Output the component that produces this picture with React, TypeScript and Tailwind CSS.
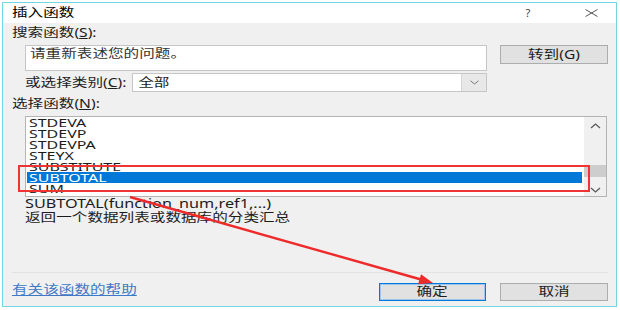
import React from "react";

function Up() {
  return (
    <svg width="11" height="6" viewBox="0 0 11 6">
      <polyline points="1,5 5.5,1 10,5" fill="none" stroke="#5a5a5a" strokeWidth="1.3" />
    </svg>
  );
}
function Down() {
  return (
    <svg width="11" height="6" viewBox="0 0 11 6">
      <polyline points="1,1 5.5,5 10,1" fill="none" stroke="#5a5a5a" strokeWidth="1.3" />
    </svg>
  );
}

const items = ["STDEVA", "STDEVP", "STDEVPA", "STEYX", "SUBSTITUTE", "SUBTOTAL", "SUM"];

export default function App() {
  return (
    <div className="relative w-[620px] h-[310px] bg-white pt-[2px] pl-[2px] overflow-hidden font-['Noto_Sans','Noto_Sans_CJK_SC',sans-serif] text-[12px] leading-[14px] text-[#1c1c1c]">
      <div className="w-[615px] h-[305px] border border-[#74d6de] flex flex-col">
        {/* title bar */}
        <div className="h-[20px] shrink-0 bg-white flex items-center pl-[9px] pr-[15px]">
          <span className="inline-block origin-left scale-x-[1.3] whitespace-nowrap text-black">插入函数</span>
          <span className="ml-auto w-[16px] text-center text-[#444] text-[11px]">?</span>
          <span className="ml-[45px] w-[20px] flex justify-center">
            <svg width="13" height="8" viewBox="0 0 13 8">
              <line x1="0.5" y1="0.5" x2="12.5" y2="7.5" stroke="#555" strokeWidth="1" />
              <line x1="0.5" y1="7.5" x2="12.5" y2="0.5" stroke="#555" strokeWidth="1" />
            </svg>
          </span>
        </div>

        {/* body */}
        <div className="flex-1 bg-[#f0f0f0] flex flex-col pl-[9px] pr-[8px] pb-[5px]">
          <div className="mt-[3px] h-[14px]">
            <span className="inline-block origin-left scale-x-[1.3] whitespace-nowrap">
              搜索函数(<span className="underline">S</span>):
            </span>
          </div>

          <div className="mt-[5px] flex items-start pl-[13px]">
            <div className="w-[462px] h-[26px] bg-white border border-[#c6c6c6] px-[4px] pt-[1px]">
              <span className="inline-block origin-left scale-x-[1.3] whitespace-nowrap text-[#333]">请重新表述您的问题。</span>
            </div>
            <div className="ml-auto w-[108px] h-[19px] bg-[#e1e1e1] border border-[#adadad] flex items-center justify-center">
              <span className="inline-block origin-center scale-x-[1.3] whitespace-nowrap">转到(G)</span>
            </div>
          </div>

          <div className="mt-[2px] h-[19px] flex items-center pl-[13px]">
            <div className="w-[107px]">
              <span className="inline-block origin-left scale-x-[1.3] whitespace-nowrap">
                或选择类别(<span className="underline">C</span>):
              </span>
            </div>
            <div className="w-[355px] h-[19px] bg-white border border-[#c6c6c6] flex items-center">
              <span className="pl-[4px] inline-block origin-left scale-x-[1.3] whitespace-nowrap">全部</span>
              <div className="ml-auto w-[25px] h-full bg-[#e8e8e8] border-l border-[#d6d6d6] flex items-center justify-center">
                <svg width="9" height="5" viewBox="0 0 9 5">
                  <polyline points="0.5,0.8 4.5,4 8.5,0.8" fill="none" stroke="#777" strokeWidth="1" />
                </svg>
              </div>
            </div>
          </div>

          <div className="mt-[5px] h-[14px]">
            <span className="inline-block origin-left scale-x-[1.3] whitespace-nowrap">
              选择函数(<span className="underline">N</span>):
            </span>
          </div>

          <div className="mt-[5px] ml-[13px] w-[582px] h-[81px] bg-white border border-[#b4b4b4] flex">
            <div className="flex-1 flex flex-col">
              {items.map((it) => (
                <div
                  key={it}
                  className={
                    it === "SUBTOTAL"
                      ? "h-[11px] shrink-0 ml-[1px] mr-[2px] bg-[#0078d7] text-white text-[11px] leading-[11px] pl-[2px]"
                      : "h-[11px] shrink-0 ml-[1px] mr-[2px] text-[11px] leading-[11px] pl-[2px]"
                  }
                >
                  <span className="inline-block origin-left scale-x-[1.45] whitespace-nowrap">{it}</span>
                </div>
              ))}
            </div>
            <div className="w-[22px] bg-[#f0f0f0] flex flex-col">
              <div className="h-[17px] flex items-center justify-center">
                <Up />
              </div>
              <div className="mt-[31px] h-[12px] bg-[#cdcdcd]" />
              <div className="mt-auto h-[12px] flex items-center justify-center">
                <Down />
              </div>
            </div>
          </div>

          <div className="h-[14px] pl-[13px]">
            <span className="inline-block origin-left scale-x-[1.35] whitespace-nowrap">SUBTOTAL(function_num,ref1,...)</span>
          </div>
          <div className="h-[14px] pl-[13px]">
            <span className="inline-block origin-left scale-x-[1.3] whitespace-nowrap">返回一个数据列表或数据库的分类汇总</span>
          </div>

          <div className="flex-1" />
          <div className="h-px bg-[#e2e2e2]" />
          <div className="mt-[10px] h-[18px] flex items-start">
            <span className="inline-block origin-left scale-x-[1.3] whitespace-nowrap text-[#3f78c6] underline">有关该函数的帮助</span>
            <div className="ml-auto w-[107px] h-[18px] bg-[#e1e1e1] border border-[#0078d7] shadow-[inset_0_0_0_1px_#9cc6ee] flex items-center justify-center">
              <span className="inline-block origin-center scale-x-[1.3] whitespace-nowrap">确定</span>
            </div>
            <div className="ml-[14px] w-[108px] h-[18px] bg-[#e1e1e1] border border-[#adadad] flex items-center justify-center">
              <span className="inline-block origin-center scale-x-[1.3] whitespace-nowrap">取消</span>
            </div>
          </div>
        </div>
      </div>

      {/* annotation overlays */}
      <div className="absolute left-[18px] top-[165px] w-[572px] h-[27px] border-2 border-[#ee3434] pointer-events-none" />
      <svg className="absolute left-0 top-0 pointer-events-none" width="620" height="310" viewBox="0 0 620 310">
        <line x1="130" y1="197" x2="421" y2="279.5" stroke="#ee2a2a" strokeWidth="2.4" />
        <polygon points="433,283 418.1,284.3 421,274.2" fill="#ee2a2a" />
      </svg>
    </div>
  );
}
